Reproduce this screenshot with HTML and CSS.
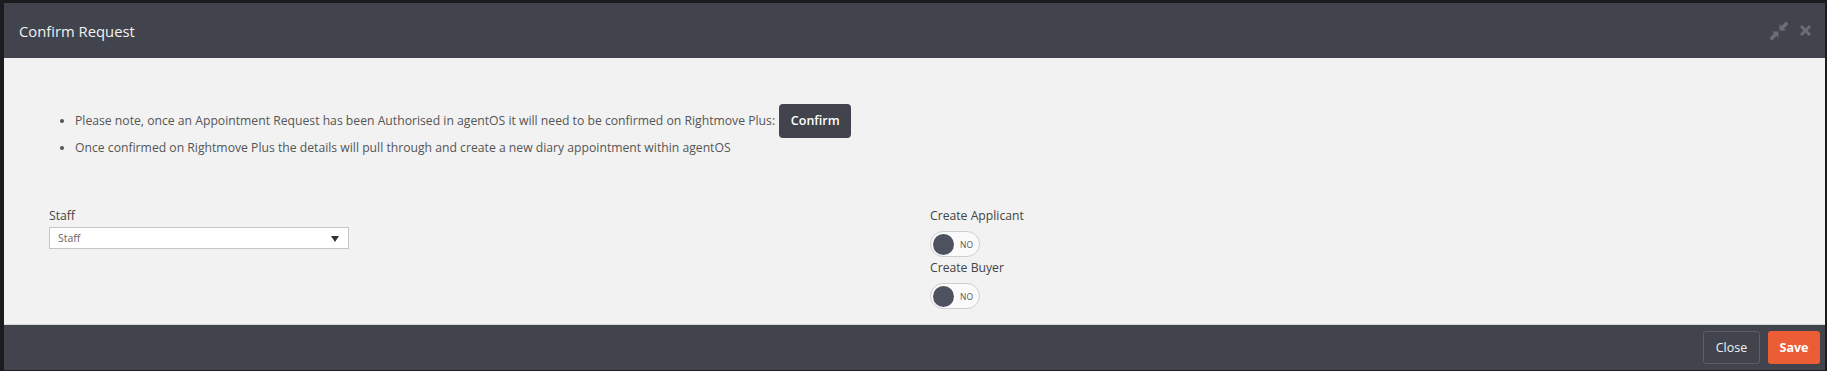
FILE: index.html
```html
<!DOCTYPE html>
<html lang="en">
<head>
<meta charset="utf-8">
<title>Confirm Request</title>
<link rel="stylesheet" href="styles.css">
</head>
<body>
<div class="modal">
  <div class="modal-header">
    <h4 class="modal-title">Confirm Request</h4>
    <div class="header-tools">
      <svg class="tool-icon" width="18" height="18" viewBox="0 0 18 18">
        <line x1="17.5" y1="0.5" x2="12" y2="6" stroke="#6a6d77" stroke-width="3.6"/>
        <polygon points="9.5,8.5 9.5,2 16,8.5" fill="#6a6d77"/>
        <line x1="0.5" y1="17.5" x2="6" y2="12" stroke="#6a6d77" stroke-width="3.6"/>
        <polygon points="8.5,9.5 8.5,16 2,9.5" fill="#6a6d77"/>
      </svg>
      <svg class="tool-icon close-x" width="11" height="11" viewBox="0 0 11 11">
        <line x1="1" y1="1" x2="10" y2="10" stroke="#6a6d77" stroke-width="2.8"/>
        <line x1="10" y1="1" x2="1" y2="10" stroke="#6a6d77" stroke-width="2.8"/>
      </svg>
    </div>
  </div>
  <div class="modal-body">
    <ul class="notes">
      <li class="note-first">Please note, once an Appointment Request has been Authorised in agentOS it will need to be confirmed on Rightmove Plus: <button class="btn-confirm">Confirm</button></li>
      <li>Once confirmed on Rightmove Plus the details will pull through and create a new diary appointment within agentOS</li>
    </ul>
    <div class="form-row">
      <div class="form-col">
        <label class="field-label">Staff</label>
        <div class="select">
          <span class="select-text">Staff</span>
          <span class="select-arrow"></span>
        </div>
      </div>
      <div class="form-col">
        <label class="field-label">Create Applicant</label>
        <div class="toggle"><span class="knob"></span><span class="toggle-text">NO</span></div>
        <label class="field-label label-second">Create Buyer</label>
        <div class="toggle"><span class="knob"></span><span class="toggle-text">NO</span></div>
      </div>
    </div>
  </div>
  <div class="modal-footer">
    <button class="btn btn-close">Close</button>
    <button class="btn btn-save">Save</button>
  </div>
</div>
</body>
</html>
```

FILE: styles.css
```css
* { box-sizing: border-box; }
html, body {
  margin: 0;
  padding: 0;
  background: #1b1c1f;
  font-family: "Open Sans", "Noto Sans", sans-serif;
}
body {
  padding: 3px 2px 1px 4px;
  height: 371px;
}
.modal {
  display: flex;
  flex-direction: column;
  height: 367px;
  background: #f2f2f2;
}
.modal-header {
  height: 55px;
  background: #41444d;
  display: flex;
  align-items: center;
  justify-content: space-between;
  padding: 0 14px 0 15px;
}
.modal-title {
  margin: 0;
  color: #f2f2f2;
  font-size: 14.8px;
  font-weight: 400;
}
.header-tools {
  display: flex;
  align-items: center;
  gap: 12px;
}
.tool-icon { display: block; }
.modal-body {
  flex: 1;
  padding: 46px 28px 0 31px;
  background: #f2f2f2;
  border-bottom: 1px solid #d8d8d8;
}
.notes {
  margin: 0;
  padding-left: 40px;
  color: #555;
  font-size: 12.2px;
  line-height: 20px;
}
.note-first {
  height: 34px;
  line-height: 34px;
}
.btn-confirm {
  vertical-align: middle;
  height: 34px;
  width: 72px;
  margin-left: 1px;
  border: 0;
  border-radius: 4px;
  background: #41444d;
  color: #fff;
  font-family: inherit;
  font-size: 12.5px;
  font-weight: 600;
  position: relative;
  top: -1px;
}
.form-row {
  display: grid;
  grid-template-columns: 1fr 1fr;
  margin-top: 48px;
}
.form-col {
  padding-left: 14px;
}
.field-label {
  display: block;
  font-size: 12.2px;
  line-height: 20px;
  color: #444;
}
.label-second { margin-top: 1px; }
.select {
  margin-top: 1px;
  width: 300px;
  height: 22px;
  background: #fff;
  border: 1px solid #c6c6c6;
  display: flex;
  align-items: center;
  justify-content: space-between;
  padding: 0 9px 0 8px;
}
.select-text {
  font-size: 10.5px;
  color: #666;
}
.select-arrow {
  width: 0;
  height: 0;
  border-left: 4px solid transparent;
  border-right: 4px solid transparent;
  border-top: 6px solid #333;
  margin-top: 2px;
}
.toggle {
  margin-top: 5px;
  width: 50px;
  height: 26px;
  border: 1px solid #cfcfcf;
  border-radius: 13px;
  background: #fafafa;
  display: flex;
  align-items: center;
  padding-left: 2px;
}
.knob {
  width: 21px;
  height: 21px;
  border-radius: 50%;
  background: #4e5160;
}
.toggle-text {
  margin-left: 6px;
  font-size: 8.5px;
  color: #555;
}
.modal-footer {
  height: 45px;
  background: #41444d;
  display: flex;
  justify-content: flex-end;
  align-items: flex-start;
  gap: 8px;
  padding: 6px 5px 0 0;
}
.btn {
  height: 33px;
  border-radius: 3px;
  font-family: inherit;
  font-size: 12.5px;
  color: #f2f2f2;
}
.btn-close {
  width: 57px;
  background: transparent;
  border: 1px solid #5b5e68;
}
.btn-save {
  width: 52px;
  background: #ec5d36;
  border: 0;
  font-weight: 700;
  color: #fff;
}
```
